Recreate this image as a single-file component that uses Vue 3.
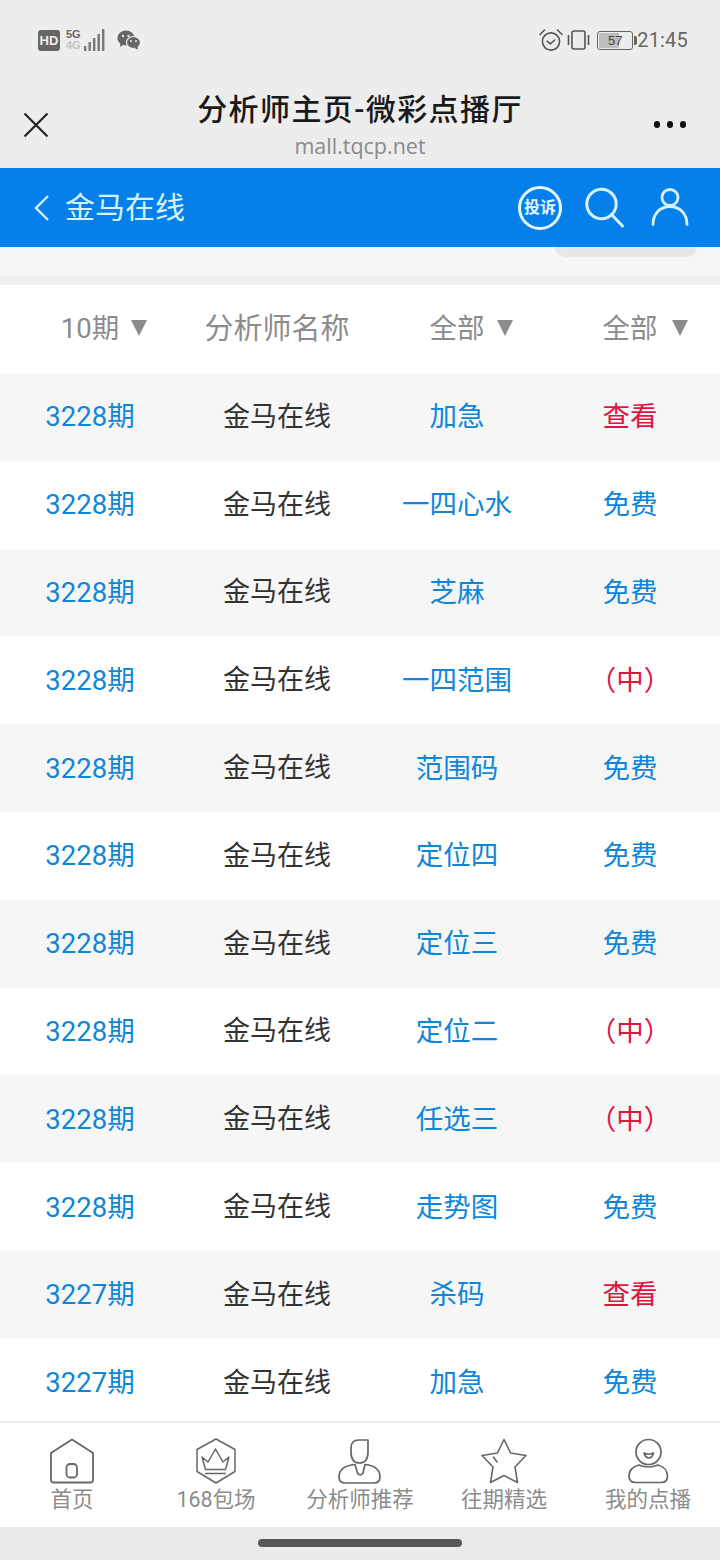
<script setup>
const rows = [
  ['3228期', '加急', '查看', 1],
  ['3228期', '一四心水', '免费', 0],
  ['3228期', '芝麻', '免费', 0],
  ['3228期', '一四范围', '（中）', 1],
  ['3228期', '范围码', '免费', 0],
  ['3228期', '定位四', '免费', 0],
  ['3228期', '定位三', '免费', 0],
  ['3228期', '定位二', '（中）', 1],
  ['3228期', '任选三', '（中）', 1],
  ['3228期', '走势图', '免费', 0],
  ['3227期', '杀码', '查看', 1],
  ['3227期', '加急', '免费', 0],
]
const heads = [
  { t: '10期', arrow: true },
  { t: '分析师名称', arrow: false, cls: 'wide' },
  { t: '全部', arrow: true },
  { t: '全部', arrow: true, cls: 'last' },
]
</script>

<template>
  <div class="page">
    <header class="top">
      <div class="status">
        <div class="status-left">
          <span class="hd">HD</span>
          <span class="net"><i>5G</i><i class="faint">4G</i></span>
          <svg class="bars" width="22" height="24" viewBox="0 0 22 24">
            <rect x="1" y="18" width="2.4" height="5" fill="#777" />
            <rect x="5.5" y="14" width="2.4" height="9" fill="#777" />
            <rect x="10" y="10" width="2.4" height="13" fill="#777" />
            <rect x="14.5" y="6" width="2.4" height="17" fill="#777" />
            <rect x="19" y="1" width="2.4" height="22" fill="#777" />
          </svg>
          <svg class="wechat" width="24" height="20" viewBox="0 0 24 20">
            <ellipse cx="9" cy="8" rx="8.6" ry="7.4" fill="#666" />
            <path d="M3.5 12.5 L3 17 L7.5 14 Z" fill="#666" />
            <ellipse cx="16.5" cy="12.5" rx="7" ry="6" fill="#666" stroke="#ededed" stroke-width="1.2" />
            <path d="M20.5 16 L21 19.5 L17.5 18 Z" fill="#666" />
            <circle cx="6" cy="6" r="1.2" fill="#ededed" />
            <circle cx="11.5" cy="6" r="1.2" fill="#ededed" />
            <circle cx="14" cy="11" r="1" fill="#ededed" />
            <circle cx="19" cy="11" r="1" fill="#ededed" />
          </svg>
        </div>
        <div class="status-right">
          <svg width="24" height="24" viewBox="0 0 24 24" fill="none" stroke="#555" stroke-width="1.6">
            <circle cx="12" cy="13.5" r="8.6" />
            <path d="M8.2 13.2 L11.2 15.8 L15.8 12" stroke-linecap="round" stroke-linejoin="round" />
            <path d="M1 6.5 L5.5 2 M23 6.5 L18.5 2" stroke-linecap="round" />
          </svg>
          <svg class="vib" width="23" height="20" viewBox="0 0 23 20" fill="none" stroke="#555" stroke-width="1.6">
            <rect x="5" y="1" width="13" height="18" rx="2" />
            <path d="M1.5 5 V15 M21.5 5 V15" />
          </svg>
          <span class="battery"><span class="fill"></span><b>57</b></span>
          <span class="time">21:45</span>
        </div>
      </div>
      <div class="webbar">
        <svg class="close" width="26" height="26" viewBox="0 0 26 26" stroke="#222" stroke-width="2.2" fill="none">
          <path d="M1.5 1.5 L24.5 24.5 M24.5 1.5 L1.5 24.5" />
        </svg>
        <div class="webtitle">
          <div class="name">分析师主页-微彩点播厅</div>
          <div class="url">mall.tqcp.net</div>
        </div>
        <div class="dots"><i></i><i></i><i></i></div>
      </div>
    </header>

    <div class="bluebar">
      <svg class="back" width="17" height="28" viewBox="0 0 17 28" fill="none" stroke="#d6f2ff" stroke-width="2.4">
        <path d="M15 2 L3 14 L15 26" />
      </svg>
      <span class="bluetitle">金马在线</span>
      <div class="actions">
        <span class="complain">投诉</span>
        <svg class="search" width="42" height="44" viewBox="0 0 42 44" fill="none" stroke="#d6f2ff" stroke-width="3">
          <circle cx="17.5" cy="18" r="14.7" />
          <path d="M28.5 29.5 L38.5 40" stroke-linecap="round" />
        </svg>
        <svg class="user" width="40" height="44" viewBox="0 0 40 44" fill="none" stroke="#d6f2ff" stroke-width="2.8">
          <circle cx="20" cy="11.5" r="8" />
          <path d="M3 38.5 C3 28 10 20.5 20 20.5 C30 20.5 37 28 37 38.5" stroke-linecap="round" />
        </svg>
      </div>
    </div>

    <div class="strip"><div class="pill"></div></div>

    <main class="table">
      <div class="row head">
        <div v-for="(h, i) in heads" :key="i" class="cell">
          <span class="label" :class="h.cls">{{ h.t }}<i v-if="h.arrow" class="tri"></i></span>
        </div>
      </div>
      <div v-for="(r, i) in rows" :key="i" class="row" :class="{ alt: i % 2 === 0 }">
        <div class="cell blue">{{ r[0] }}</div>
        <div class="cell dark">金马在线</div>
        <div class="cell blue">{{ r[1] }}</div>
        <div class="cell" :class="r[3] ? 'red' : 'blue'">{{ r[2] }}</div>
      </div>
    </main>

    <nav class="nav">
      <div class="item">
        <svg width="46" height="46" viewBox="0 0 46 46" fill="none" stroke="#666" stroke-width="1.8" stroke-linejoin="round">
          <path d="M2 15 L23 1.5 L44 15 V42 Q44 44.5 41.5 44.5 H4.5 Q2 44.5 2 42 Z" />
          <rect x="17.5" y="26" width="10.5" height="13.5" rx="3.5" />
        </svg>
        <span>首页</span>
      </div>
      <div class="item">
        <svg width="46" height="46" viewBox="0 0 46 46" fill="none" stroke="#666" stroke-width="1.5" stroke-linejoin="round">
          <path d="M23 1 L42 11.5 V33.5 L23 45 L4 33.5 V11.5 Z" />
          <path d="M9 19 L15 24 L22.5 11 L30 24 L36 19 L32.5 31.5 H12.5 Z" />
          <path d="M12 35.5 H33" />
        </svg>
        <span>168包场</span>
      </div>
      <div class="item">
        <svg width="46" height="46" viewBox="0 0 46 46" fill="none" stroke="#666" stroke-width="1.7" stroke-linejoin="round">
          <path d="M31 2 H22 Q14 2 14 10 V14 Q14 25 22.5 25 Q31 25 31 14 Z" />
          <path d="M18 26.5 Q2 28 2 39 Q2 45 8 45 H37 Q43 45 43 39 Q43 28 28 26.5 L26 35 Q23 39 20.5 35 Z" />
        </svg>
        <span>分析师推荐</span>
      </div>
      <div class="item">
        <svg width="46" height="46" viewBox="0 0 46 46" fill="none" stroke="#666" stroke-width="1.6" stroke-linejoin="round">
          <path d="M23 1.5 L29.5 15 L45 17.5 L34 29 L36.5 44.5 L23 37.5 L9.5 44.5 L12 29 L1 17.5 L16.5 15 Z" />
          <path d="M12.5 19 L16 24" stroke-linecap="round" />
        </svg>
        <span>往期精选</span>
      </div>
      <div class="item">
        <svg width="46" height="46" viewBox="0 0 46 46" fill="none" stroke="#666" stroke-width="1.7" stroke-linejoin="round">
          <circle cx="23.5" cy="14" r="12.5" />
          <path d="M19 15 Q24 17.5 28.5 15 Q27 20 24 20 Q20.5 20 19 15 Z" />
          <path d="M14 27 C6 29 4 34 4 38 Q4 44.5 11 44.5 H36 Q42.5 44.5 42.5 38 C42.5 34 40 29 33 27 Q23.5 31 14 27 Z" />
        </svg>
        <span>我的点播</span>
      </div>
    </nav>

    <div class="gesture"><div class="handle"></div></div>
  </div>
</template>

<style>
html, body { margin: 0; padding: 0; background: #fff; }
</style>

<style scoped>
.page {
  width: 720px;
  height: 1560px;
  display: flex;
  flex-direction: column;
  overflow: hidden;
  font-family: Roboto, "Noto Sans CJK SC", sans-serif;
}
.top { height: 168px; background: #ededed; flex: none; display: flex; flex-direction: column; }
.status {
  height: 80px;
  padding: 0 32px 0 38px;
  display: flex;
  justify-content: space-between;
  align-items: center;
  box-sizing: border-box;
}
.status-left, .status-right { display: flex; align-items: center; }
.hd {
  width: 22px; height: 21px; border-radius: 3px;
  background: #666; color: #eee;
  font: 700 13px/21px "Liberation Sans", sans-serif;
  text-align: center;
}
.net { display: flex; flex-direction: column; width: 16px; margin-left: 6px; }
.net i { font: 700 11px/11px "Liberation Sans", sans-serif; font-style: normal; color: #666; }
.net .faint { color: #c4c4c4; }
.bars { margin-left: 1px; }
.wechat { margin-left: 12px; }
.status-right { color: #666; }
.vib { margin-left: 4px; }
.battery {
  position: relative;
  width: 34px; height: 17px; margin-left: 7px;
  border: 1.5px solid #666; border-radius: 3px;
  display: flex; align-items: center; justify-content: center;
  box-sizing: content-box;
}
.battery::after {
  content: ""; position: absolute; right: -5px; top: 4px;
  width: 3px; height: 9px; background: #666; border-radius: 0 2px 2px 0;
}
.battery .fill { position: absolute; left: 1px; top: 1px; bottom: 1px; width: 20px; background: #bdbdbd; border-radius: 1px; }
.battery b { position: relative; font: 400 13px/17px "Liberation Sans", sans-serif; color: #444; }
.time { font: 400 20px/24px Roboto, sans-serif; color: #666; margin-left: 4px; letter-spacing: 0.2px; }

.webbar { flex: 1; display: grid; grid-template-columns: 120px 1fr 120px; align-items: center; box-sizing: border-box; }
.close { margin-left: 23px; margin-top: 1px; }
.webtitle { text-align: center; margin-top: 2px; }
.name { font-size: 30px; line-height: 40px; font-weight: 500; color: #1a1a1a; white-space: nowrap; letter-spacing: 1.4px; padding-top: 1px; }
.url { font-size: 21.5px; line-height: 30px; color: #8a8a8a; font-family: "Open Sans", sans-serif; margin-top: 1px; }
.dots { display: flex; gap: 6.5px; justify-content: flex-end; padding-right: 34px; margin-top: 1px; }
.dots i { width: 6.5px; height: 6.5px; border-radius: 50%; background: #111; }

.bluebar {
  height: 79px; flex: none; background: #0580ea;
  display: flex; align-items: center; padding: 0 30px 0 33px; box-sizing: border-box;
  color: #d6f2ff;
}
.back { flex: none; }
.bluetitle { font-size: 30px; margin-left: 15px; margin-top: -6px; flex: 1; }
.actions { display: flex; align-items: flex-start; height: 44px; }
.search { margin-left: 22px; }
.user { margin-left: 24px; }
.complain {
  width: 44px; height: 44px; box-sizing: border-box;
  border: 3px solid #e6f7ff; border-radius: 50%;
  font-size: 16px; font-weight: 700; line-height: 38px;
  color: #e6f7ff; white-space: nowrap;
  display: flex; justify-content: center;
}

.strip {
  height: 38px; flex: none; background: #f6f6f6;
  border-bottom: 9px solid #efefef; box-sizing: border-box;
  display: flex; justify-content: flex-end; padding-right: 23px;
}
.pill { width: 142px; height: 10px; background: #e7e7e7; border-radius: 0 0 40px 40px; }

.table { flex: 1; min-height: 0; overflow: hidden; background: #fff; }
.row {
  display: grid;
  grid-template-columns: 180px 194px 166px 180px;
  height: 87.8px;
  align-items: center;
  font-size: 27.5px;
  padding-bottom: 5px;
  box-sizing: border-box;
}
.row.alt { background: #f6f6f6; }
.row.head { height: 88px; padding-bottom: 6px; color: #8c8c8c; }
.cell { text-align: center; white-space: nowrap; }
.dark { font-size: 27px; color: #333; }
.label { position: relative; display: inline-block; }
.label.wide { font-size: 29px; }
.tri {
  position: absolute; left: calc(100% + 12px); top: 14px;
  width: 0; height: 0;
  border-left: 8.5px solid transparent;
  border-right: 8.5px solid transparent;
  border-top: 16px solid #8c8c8c;
}
.last .tri { left: calc(100% + 14px); }
.blue { color: #0f86d8; }
.red { color: #e0153f; }

.nav {
  height: 106px; flex: none; background: #fff;
  border-top: 2px solid #ededed; box-sizing: border-box;
  display: grid; grid-template-columns: repeat(5, 1fr);
  padding-top: 15px;
}
.item { display: flex; flex-direction: column; align-items: center; color: #8c8c8c; font-size: 21.5px; line-height: 30px; }
.item svg { flex: none; }
.item span { margin-top: 1px; white-space: nowrap; }

.gesture { height: 33px; flex: none; background: #ebebeb; padding-top: 12px; box-sizing: border-box; }
.handle { width: 204px; height: 8px; margin-left: 258px; border-radius: 4px; background: #595959; }
</style>
